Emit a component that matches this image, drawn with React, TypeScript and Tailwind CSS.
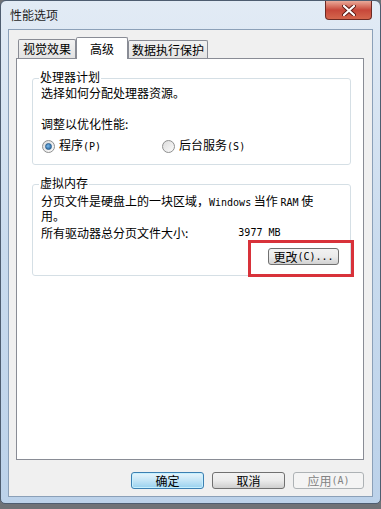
import React from "react";

const cjk = "font-['Noto_Sans_CJK_SC','Noto_Sans_CJK_JP',sans-serif]";
const mono = "font-['DejaVu_Sans_Mono','Liberation_Mono',monospace] text-[10px]";

const Radio: React.FC<{ checked?: boolean }> = ({ checked }) => (
  <span className="w-[13px] h-[13px] rounded-full border border-[#8e8f8f] bg-gradient-to-br from-[#dcdcdc] to-[#fbfbfb] flex items-center justify-center">
    {checked && (
      <span className="w-[7px] h-[7px] rounded-full bg-[radial-gradient(circle_at_40%_40%,#7ab8ea,#1c5a93)] border border-[#2b5f8f]" />
    )}
  </span>
);

const Tab: React.FC<{ label: string; active?: boolean; w: string; h: string }> = ({ label, active, w, h }) => (
  <div
    className={
      active
        ? `${w} ${h} -mb-px z-10 border border-b-0 border-[#898c95] bg-white flex items-center justify-center rounded-t-[2px]`
        : `${w} ${h} border border-b-0 border-[#898c95] bg-gradient-to-b from-[#f2f2f2] to-[#e3e3e3] flex items-center justify-center rounded-t-[2px]`
    }
  >
    <span className="text-[12px] leading-[14px] text-black">{label}</span>
  </div>
);

const App: React.FC = () => {
  return (
    <div className={`w-[381px] h-[509px] bg-[#6f7277] ${cjk}`}>
      <div className="w-[381px] h-[504px] flex flex-col bg-gradient-to-b from-[#e2ebf5] via-[#c9dbee] to-[#bcd2ea] border border-[#4e5d70] rounded-t-[6px] rounded-b-[5px] overflow-hidden">
        {/* TITLE BAR */}
        <div className="h-[28px] flex items-start justify-between">
          <span className="mt-[7px] ml-[9px] text-[12px] leading-[14px] text-[#1e1e1e]">性能选项</span>
          <div className="mr-[8px] w-[47px] h-[19px] rounded-b-[4px] border border-t-0 border-[#6d2a23] bg-gradient-to-b from-[#e9a999] via-[#c7473a] to-[#d4664d] flex items-center justify-center">
            <svg width="14" height="11" viewBox="0 0 14 11">
              <path d="M2 1 L12 10 M12 1 L2 10" stroke="#5a1a14" strokeWidth="4" strokeLinecap="round" />
              <path d="M2 1 L12 10 M12 1 L2 10" stroke="#ffffff" strokeWidth="2.2" strokeLinecap="round" />
            </svg>
          </div>
        </div>

        {/* CLIENT AREA */}
        <div className="mx-[7px] flex-1 flex flex-col border border-[#8ba0b8] bg-[#f0f0f0] pl-[7px] pr-[8px] pt-[7px] pb-[7px]">
          {/* TABS */}
          <div className="flex items-end pl-[2px]">
            <Tab label="视觉效果" w="w-[58px]" h="h-[19px]" />
            <Tab label="高级" active w="w-[52px]" h="h-[22px]" />
            <Tab label="数据执行保护" w="w-[80px]" h="h-[18px]" />
          </div>

          {/* TAB PANEL */}
          <div className="relative flex-1 border border-[#898c95] bg-white pt-[11px] text-[12px] text-black">
            <fieldset className="ml-[15px] mr-[12px] border border-[#d5dfe5] rounded-[3px] px-[8px] pb-[10px]">
              <legend className="ml-[-2px] px-[1px] leading-[14px] pb-[2px]">处理器计划</legend>
              <div className="leading-[14px]">选择如何分配处理器资源。</div>
              <div className="leading-[14px] mt-[17px]">调整以优化性能:</div>
              <div className="mt-[7px] h-[16px] flex items-center">
                <div className="flex items-center gap-[4px] ml-[1px]">
                  <Radio checked />
                  <span className="leading-[14px]">
                    程序<span className={mono}>(P)</span>
                  </span>
                </div>
                <div className="flex items-center gap-[4px] ml-[61px]">
                  <Radio />
                  <span className="leading-[14px]">
                    后台服务<span className={mono}>(S)</span>
                  </span>
                </div>
              </div>
            </fieldset>

            <fieldset className="mt-[11px] ml-[15px] mr-[12px] border border-[#d5dfe5] rounded-[3px] px-[8px] pb-[10px]">
              <legend className="ml-[-2px] px-[1px] leading-[14px] pb-[2px]">虚拟内存</legend>
              <div className="leading-[13px] mt-[2px]">
                分页文件是硬盘上的一块区域，<span className={mono}>Windows</span> 当作 <span className={mono}>RAM</span> 使
              </div>
              <div className="leading-[13px]">用。</div>
              <div className="mt-[4px] leading-[14px] flex">
                <span>所有驱动器总分页文件大小:</span>
                <span className={`${mono} ml-[50px]`}>3977 MB</span>
              </div>
              <div className="mt-[8px] flex justify-end pr-[3px]">
                <button
                  type="button"
                  className="w-[71px] h-[17px] rounded-[3px] border border-[#707070] bg-gradient-to-b from-[#f2f2f2] via-[#ebebeb] to-[#d2d2d2] flex items-center justify-center leading-[14px] whitespace-nowrap"
                >
                  更改<span className={mono}>(C)...</span>
                </button>
              </div>
            </fieldset>

            {/* annotation box */}
            <div className="absolute left-[231px] top-[181px] w-[106px] h-[37px] border-[3px] border-[#d8323a]" />
          </div>

          {/* BOTTOM BUTTONS */}
          <div className="mt-[12px] flex justify-end gap-[8px]">
            <button
              type="button"
              className="w-[73px] h-[17px] rounded-[3px] border border-[#3c7fb1] bg-gradient-to-b from-[#e8f5fc] via-[#c4e5f6] to-[#98d1ef] shadow-[inset_0_0_0_1px_#c6f0ff] flex items-center justify-center text-[12px] leading-[14px]"
            >
              确定
            </button>
            <button
              type="button"
              className="w-[73px] h-[17px] rounded-[3px] border border-[#707070] bg-gradient-to-b from-[#f2f2f2] via-[#ebebeb] to-[#cfcfcf] flex items-center justify-center text-[12px] leading-[14px]"
            >
              取消
            </button>
            <button
              type="button"
              className="w-[71px] h-[17px] rounded-[3px] border border-[#adb2b5] bg-[#f4f4f4] flex items-center justify-center text-[12px] leading-[14px] text-[#838383]"
            >
              应用<span className={mono}>(A)</span>
            </button>
          </div>
        </div>
        <div className="h-[6px]" />
      </div>
    </div>
  );
};

export default App;
